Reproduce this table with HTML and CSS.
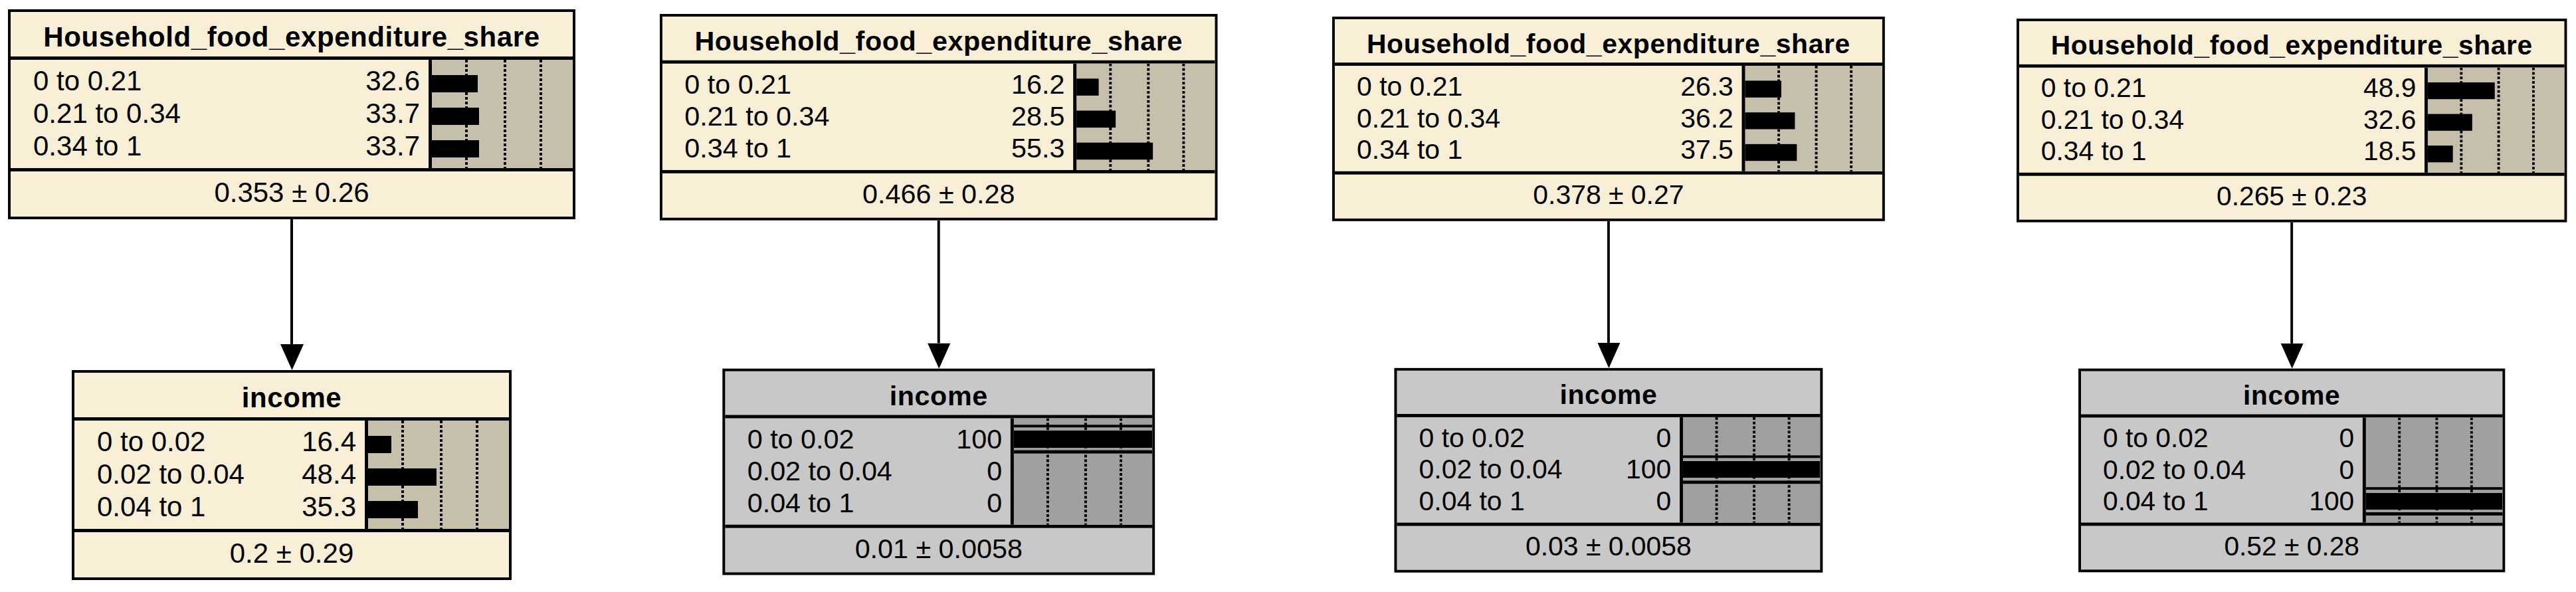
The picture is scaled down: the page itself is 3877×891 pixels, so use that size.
FILE: index.html
```html
<!DOCTYPE html>
<html lang="en">
<head>
<meta charset="utf-8">
<title>Household food expenditure share → income</title>
<link rel="stylesheet" href="styles.css">
</head>
<body>
<div class="canvas">

  <div class="col col-1">
    <div class="node node-top">
      <div class="node-title">Household_food_expenditure_share</div>
      <div class="node-body">
        <div class="states">
          <div class="state"><span>0 to 0.21</span><span>32.6</span></div>
          <div class="state"><span>0.21 to 0.34</span><span>33.7</span></div>
          <div class="state"><span>0.34 to 1</span><span>33.7</span></div>
        </div>
        <div class="bars">
          <div class="bar" style="width:32.6%"></div>
          <div class="bar" style="width:33.7%"></div>
          <div class="bar" style="width:33.7%"></div>
        </div>
      </div>
      <div class="node-foot">0.353 ± 0.26</div>
    </div>
    <div class="link"><div class="link-line"></div><svg class="link-head" viewBox="0 0 35 39"><polygon points="0,0 35,0 17.5,39" fill="#000"/></svg></div>
    <div class="node node-child">
      <div class="node-title">income</div>
      <div class="node-body">
        <div class="states">
          <div class="state"><span>0 to 0.02</span><span>16.4</span></div>
          <div class="state"><span>0.02 to 0.04</span><span>48.4</span></div>
          <div class="state"><span>0.04 to 1</span><span>35.3</span></div>
        </div>
        <div class="bars">
          <div class="bar" style="width:16.4%"></div>
          <div class="bar" style="width:48.4%"></div>
          <div class="bar" style="width:35.3%"></div>
        </div>
      </div>
      <div class="node-foot">0.2 ± 0.29</div>
    </div>
  </div>

  <div class="col col-2">
    <div class="node node-top">
      <div class="node-title">Household_food_expenditure_share</div>
      <div class="node-body">
        <div class="states">
          <div class="state"><span>0 to 0.21</span><span>16.2</span></div>
          <div class="state"><span>0.21 to 0.34</span><span>28.5</span></div>
          <div class="state"><span>0.34 to 1</span><span>55.3</span></div>
        </div>
        <div class="bars">
          <div class="bar" style="width:16.2%"></div>
          <div class="bar" style="width:28.5%"></div>
          <div class="bar" style="width:55.3%"></div>
        </div>
      </div>
      <div class="node-foot">0.466 ± 0.28</div>
    </div>
    <div class="link"><div class="link-line"></div><svg class="link-head" viewBox="0 0 35 39"><polygon points="0,0 35,0 17.5,39" fill="#000"/></svg></div>
    <div class="node node-child obs">
      <div class="node-title">income</div>
      <div class="node-body">
        <div class="states">
          <div class="state"><span>0 to 0.02</span><span>100</span></div>
          <div class="state"><span>0.02 to 0.04</span><span>0</span></div>
          <div class="state"><span>0.04 to 1</span><span>0</span></div>
        </div>
        <div class="bars">
          <div class="bar full"></div>
          <div class="bar" style="width:0%"></div>
          <div class="bar" style="width:0%"></div>
        </div>
      </div>
      <div class="node-foot">0.01 ± 0.0058</div>
    </div>
  </div>

  <div class="col col-3">
    <div class="node node-top">
      <div class="node-title">Household_food_expenditure_share</div>
      <div class="node-body">
        <div class="states">
          <div class="state"><span>0 to 0.21</span><span>26.3</span></div>
          <div class="state"><span>0.21 to 0.34</span><span>36.2</span></div>
          <div class="state"><span>0.34 to 1</span><span>37.5</span></div>
        </div>
        <div class="bars">
          <div class="bar" style="width:26.3%"></div>
          <div class="bar" style="width:36.2%"></div>
          <div class="bar" style="width:37.5%"></div>
        </div>
      </div>
      <div class="node-foot">0.378 ± 0.27</div>
    </div>
    <div class="link"><div class="link-line"></div><svg class="link-head" viewBox="0 0 35 39"><polygon points="0,0 35,0 17.5,39" fill="#000"/></svg></div>
    <div class="node node-child obs">
      <div class="node-title">income</div>
      <div class="node-body">
        <div class="states">
          <div class="state"><span>0 to 0.02</span><span>0</span></div>
          <div class="state"><span>0.02 to 0.04</span><span>100</span></div>
          <div class="state"><span>0.04 to 1</span><span>0</span></div>
        </div>
        <div class="bars">
          <div class="bar" style="width:0%"></div>
          <div class="bar full"></div>
          <div class="bar" style="width:0%"></div>
        </div>
      </div>
      <div class="node-foot">0.03 ± 0.0058</div>
    </div>
  </div>

  <div class="col col-4">
    <div class="node node-top">
      <div class="node-title">Household_food_expenditure_share</div>
      <div class="node-body">
        <div class="states">
          <div class="state"><span>0 to 0.21</span><span>48.9</span></div>
          <div class="state"><span>0.21 to 0.34</span><span>32.6</span></div>
          <div class="state"><span>0.34 to 1</span><span>18.5</span></div>
        </div>
        <div class="bars">
          <div class="bar" style="width:48.9%"></div>
          <div class="bar" style="width:32.6%"></div>
          <div class="bar" style="width:18.5%"></div>
        </div>
      </div>
      <div class="node-foot">0.265 ± 0.23</div>
    </div>
    <div class="link"><div class="link-line"></div><svg class="link-head" viewBox="0 0 35 39"><polygon points="0,0 35,0 17.5,39" fill="#000"/></svg></div>
    <div class="node node-child obs">
      <div class="node-title">income</div>
      <div class="node-body">
        <div class="states">
          <div class="state"><span>0 to 0.02</span><span>0</span></div>
          <div class="state"><span>0.02 to 0.04</span><span>0</span></div>
          <div class="state"><span>0.04 to 1</span><span>100</span></div>
        </div>
        <div class="bars">
          <div class="bar" style="width:0%"></div>
          <div class="bar" style="width:0%"></div>
          <div class="bar full"></div>
        </div>
      </div>
      <div class="node-foot">0.52 ± 0.28</div>
    </div>
  </div>

</div>
</body>
</html>
```

FILE: styles.css
```css
html, body {
  margin: 0;
  padding: 0;
  background: #ffffff;
}

body {
  font-family: "Liberation Sans", Arial, sans-serif;
  color: #000000;
}

.canvas {
  position: relative;
  width: 3877px;
  height: 891px;
  overflow: hidden;
}

/* each column = one copy of the two-node network; placed on the free canvas */
.col {
  position: absolute;
  width: 854px;
  display: flex;
  flex-direction: column;
  align-items: center;
  transform-origin: 0 0;
}

.col-1 { left: 12px;   top: 14px; }
.col-2 { left: 993px;  top: 21px; transform: scale(0.983); }
.col-3 { left: 2005px; top: 25px; transform: scale(0.974); }
.col-4 { left: 3035px; top: 28px; transform: scale(0.970); }

.node {
  box-sizing: border-box;
  border: 4px solid #000;
  background: #f8efd6;
}

.node-top   { width: 854px; }
.node-child { width: 662px; }

.node.obs { background: #c8c8c8; }

.node-title {
  height: 53px;
  padding-top: 14px;
  line-height: 48px;
  font-size: 42px;
  font-weight: bold;
  letter-spacing: 0.6px;
  text-align: center;
  white-space: nowrap;
  border-bottom: 5px solid #000;
}

.node-body {
  display: grid;
  grid-template-columns: 1fr 217px;
  height: 163px;
  border-bottom: 5px solid #000;
}

.states {
  padding-top: 7px;
  font-size: 42px;
  line-height: 49px;
}

.state {
  display: flex;
  justify-content: space-between;
  padding: 0 13px 0 34px;
  white-space: nowrap;
}

.bars {
  border-left: 5px solid #000;
  background-color: #c6bfac;
  background-image:
    linear-gradient(#000 4px, transparent 4px),
    linear-gradient(#000 4px, transparent 4px),
    linear-gradient(#000 4px, transparent 4px);
  background-size: 4px 7px;
  background-repeat: repeat-y;
  background-position: 50px 0, 108px 0, 162px 0;
  padding-top: 23px;
  display: flex;
  flex-direction: column;
  gap: 23px;
}

.obs .bars { background-color: #a0a0a0; }

.bar {
  height: 26px;
  background: #000;
}

/* observed state: full bar framed by two thin lines */
.bar.full {
  box-sizing: content-box;
  width: 100%;
  margin: -13px 0 -5px;
  padding: 5px 0 4px;
  border-top: 4px solid #000;
  border-bottom: 5px solid #000;
  background: #000;
  background-clip: content-box;
}

.node-foot {
  height: 60px;
  padding-top: 8px;
  line-height: 48px;
  font-size: 42px;
  text-align: center;
  white-space: nowrap;
}

.link {
  height: 227px;
  display: flex;
  flex-direction: column;
  align-items: center;
}

.link-line {
  width: 4px;
  flex: 1;
  background: #000;
}

.link-head {
  display: block;
  width: 35px;
  height: 39px;
}
```
